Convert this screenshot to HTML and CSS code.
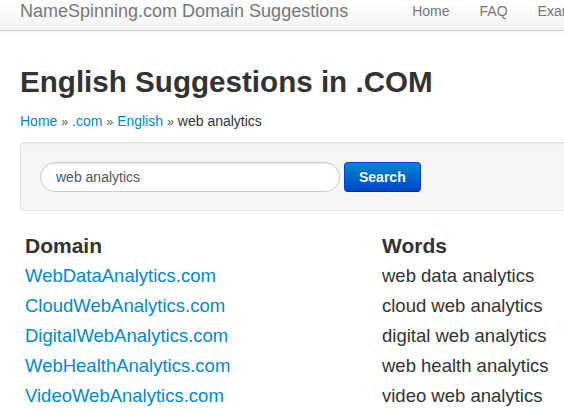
FILE: index.html
```html
<!DOCTYPE html>
<html>
<head>
<meta charset="utf-8">
<title>English Suggestions in .COM</title>
<link rel="stylesheet" href="styles.css">
</head>
<body>
<div class="navbar">
  <a class="brand" href="#">NameSpinning.com Domain Suggestions</a>
  <ul class="nav">
    <li><a href="#">Home</a></li>
    <li><a href="#">FAQ</a></li>
    <li><a href="#">Examples</a></li>
  </ul>
</div>
<div class="container">
  <h1 class="title">English Suggestions in .COM</h1>
  <div class="crumbs">
    <a href="#">Home</a> <span class="sep">»</span> <a href="#">.com</a> <span class="sep">»</span> <a href="#">English</a> <span class="sep">»</span> <span class="current">web analytics</span>
  </div>
  <form class="well">
    <input class="search-input" type="text" value="web analytics">
    <button class="btn" type="button">Search</button>
  </form>
  <div class="results">
    <div class="th">Domain</div><div class="th">Words</div>
    <a class="td" href="#">WebDataAnalytics.com</a><div class="td">web data analytics</div>
    <a class="td" href="#">CloudWebAnalytics.com</a><div class="td">cloud web analytics</div>
    <a class="td" href="#">DigitalWebAnalytics.com</a><div class="td">digital web analytics</div>
    <a class="td" href="#">WebHealthAnalytics.com</a><div class="td">web health analytics</div>
    <a class="td" href="#">VideoWebAnalytics.com</a><div class="td">video web analytics</div>
  </div>
</div>
</body>
</html>
```
FILE: styles.css
```css
html, body {
  margin: 0;
  padding: 0;
  overflow: hidden;
  background: #fff;
}
body {
  font-family: "Liberation Sans", Arial, sans-serif;
  color: #333;
  width: 564px;
  height: 409px;
}
a { color: #0088cc; text-decoration: none; }

.navbar {
  height: 30px;
  display: flex;
  align-items: flex-start;
  white-space: nowrap;
  background: linear-gradient(to bottom, #ffffff, #f2f2f2);
  border-bottom: 1px solid #d4d4d4;
  box-shadow: 0 1px 4px rgba(0,0,0,0.065);
}
.brand {
  padding-left: 20px;
  margin-right: 49px;
  font-size: 18px;
  line-height: 22px;
  color: #777;
}
.nav {
  display: flex;
  margin: 0;
  padding: 0;
  list-style: none;
}
.nav a {
  display: block;
  padding: 0 15px;
  font-size: 14px;
  line-height: 22px;
  color: #777;
}

.container {
  padding-left: 20px;
}
.title {
  margin: 31px 0 0;
  font-size: 29.6px;
  line-height: 40px;
  font-weight: bold;
  color: #333;
}
.crumbs {
  margin-top: 9px;
  font-size: 14px;
  line-height: 20px;
  color: #333;
}
.crumbs .sep { color: #555; font-size: 12.5px; }

.well {
  margin: 10px 0 0;
  width: 940px;
  padding: 19px 19px 18px;
  background: #f5f5f5;
  border: 1px solid #e3e3e3;
  border-radius: 4px;
  display: flex;
  gap: 4px;
  box-shadow: inset 0 1px 1px rgba(0,0,0,0.05);
}
.search-input {
  box-sizing: border-box;
  width: 300px;
  height: 30px;
  margin: 0;
  padding: 0 15px;
  font-family: inherit;
  font-size: 14px;
  color: #555;
  background: #fff;
  border: 1px solid #ccc;
  border-radius: 15px;
  box-shadow: inset 0 1px 1px rgba(0,0,0,0.075);
  outline: none;
}
.btn {
  box-sizing: border-box;
  height: 30px;
  margin: 0;
  padding: 0 14px;
  font-family: inherit;
  font-size: 14px;
  font-weight: bold;
  color: #fff;
  text-shadow: 0 -1px 0 rgba(0,0,0,0.25);
  background: linear-gradient(to bottom, #0088cc, #0044cc);
  border: 1px solid #0044cc;
  border-bottom-color: #002a80;
  border-radius: 4px;
}

.results {
  margin-top: 20px;
  display: grid;
  grid-template-columns: 357px 1fr;
  padding-left: 5px;
}
.th {
  font-size: 21px;
  font-weight: bold;
  line-height: 30px;
  color: #333;
}
.td {
  font-size: 18.5px;
  line-height: 30px;
  white-space: nowrap;
}
div.td { color: #333; }
```
